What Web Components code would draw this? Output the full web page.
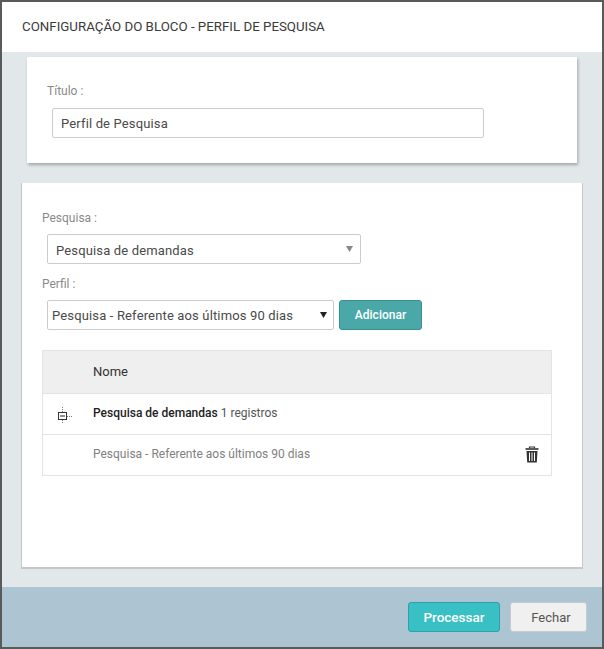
<!DOCTYPE html>
<html lang="pt">
<head>
<meta charset="utf-8">
<title>Configuração do bloco</title>
<style>
  html, body { margin: 0; padding: 0; background: #555; }
  body { font-family: Roboto, "Liberation Sans", sans-serif; }
</style>
</head>
<body>
<config-dialog heading="CONFIGURAÇÃO DO BLOCO - PERFIL DE PESQUISA">
  <config-card style="--card-margin: 5px 25px 20px 25px; --card-height: 106px; --card-pad: 27px 20px 0 20px; --card-shadow: 1px 2px 3px rgba(0, 0, 0, 0.28);">
    <field-label>Título :</field-label>
    <text-box style="--box-margin: 10px 0 0 5px; --box-width: 432px;" pad="8px">Perfil de Pesquisa</text-box>
  </config-card>
  <config-card style="--card-margin: 0 20px; --card-height: 384px; --card-pad: 28px 20px 0 20px; --card-shadow: 0 1px 0 1px #c4c8cb;">
    <field-label>Pesquisa :</field-label>
    <text-box style="--box-margin: 9px 0 0 5px; --box-width: 314px; --box-top: 2px;" pad="8px" arrow="soft">Pesquisa de demandas</text-box>
    <field-label style="--label-margin: 13px 0 0 0;">Perfil :</field-label>
    <div style="display:flex; gap:5px; margin:9px 0 0 5px;">
      <text-box style="--box-width: 287px;" pad="4px" arrow="hard">Pesquisa - Referente aos últimos 90 dias</text-box>
      <action-button kind="add">Adicionar</action-button>
    </div>
    <result-table name="Pesquisa de demandas" count="1 registros" item="Pesquisa - Referente aos últimos 90 dias"></result-table>
  </config-card>
  <action-button slot="footer" kind="primary">Processar</action-button>
  <action-button slot="footer" kind="close">Fechar</action-button>
</config-dialog>

<script>
// dialog frame: header, grey body, blue footer
class ConfigDialog extends HTMLElement {
  constructor() {
    super();
    const root = this.attachShadow({ mode: 'open' });
    root.innerHTML = `
<style>
  :host {
    display: flex;
    flex-direction: column;
    box-sizing: border-box;
    width: 604px;
    height: 649px;
    border: 2px solid #5a5a5a;
    background: #e2e7ea;
  }
  header {
    flex: 0 0 50px;
    display: flex;
    align-items: center;
    padding-left: 20px;
    padding-bottom: 1px;
    box-sizing: border-box;
    background: #fff;
    color: #3a3a3a;
    font-size: 13.3px;
  }
  main { flex: 1; }
  footer {
    flex: 0 0 60px;
    display: flex;
    justify-content: flex-end;
    align-items: center;
    gap: 10px;
    padding: 0 15px 0 0;
    box-sizing: border-box;
    background: #adc4d2;
  }
</style>
<header></header>
<main><slot></slot></main>
<footer><slot name="footer"></slot></footer>`;
    root.querySelector('header').textContent = this.getAttribute('heading');
  }
}

class ConfigCard extends HTMLElement {
  constructor() {
    super();
    this.attachShadow({ mode: 'open' }).innerHTML = `
<style>
  :host {
    display: block;
    box-sizing: border-box;
    margin: var(--card-margin);
    height: var(--card-height);
    padding: var(--card-pad);
    background: #fff;
    box-shadow: var(--card-shadow);
  }
</style>
<slot></slot>`;
  }
}

class FieldLabel extends HTMLElement {
  constructor() {
    super();
    this.attachShadow({ mode: 'open' }).innerHTML = `
<style>
  :host {
    display: block;
    margin: var(--label-margin, 0);
    color: #8a8a8a;
    font-size: 12px;
    line-height: 14px;
  }
</style>
<slot></slot>`;
  }
}

// looks like an input or a select, depending on the arrow attribute
class TextBox extends HTMLElement {
  constructor() {
    super();
    const arrow = this.getAttribute('arrow');
    let icon = '';
    if (arrow === 'soft') {
      icon = '<svg width="7" height="6" viewBox="0 0 7 6"><path d="M0 0H7L3.5 6Z" fill="#888"/></svg>';
    } else if (arrow === 'hard') {
      icon = '<svg width="7" height="6" viewBox="0 0 7 6"><path d="M0 0H7L3.5 6Z" fill="#222"/></svg>';
    }
    this.attachShadow({ mode: 'open' }).innerHTML = `
<style>
  :host {
    display: flex;
    align-items: center;
    justify-content: space-between;
    box-sizing: border-box;
    width: var(--box-width);
    height: 30px;
    margin: var(--box-margin, 0);
    padding: 0 ${arrow === 'hard' ? '6px' : '7px'} 0 ${this.getAttribute('pad')};
    background: #fff;
    border: 1px solid #ccc;
    border-radius: 2px;
    color: #4a4a4a;
    font-size: 13px;
    letter-spacing: 0.15px;
  }
  span { padding-top: var(--box-top, 0); }
</style>
<span><slot></slot></span>${icon}`;
  }
}

class ActionButton extends HTMLElement {
  constructor() {
    super();
    this.attachShadow({ mode: 'open' }).innerHTML = `
<style>
  :host {
    display: flex;
    align-items: center;
    justify-content: center;
    box-sizing: border-box;
    height: 30px;
    border-radius: 3px;
    font-weight: 500;
    font-size: 13.5px;
  }
  :host([kind=add]) {
    width: 83px;
    background: #4aa8a9;
    border: 1px solid #3a8f90;
    color: #fff;
    font-size: 12px;
  }
  :host([kind=primary]) {
    width: 92px;
    background: #38c0c4;
    border: 1px solid #2ba3a8;
    color: #fff;
  }
  :host([kind=close]) {
    width: 77px;
    padding-left: 5px;
    background: #f0f0f0;
    border: 1px solid #c4ccd2;
    color: #555;
    font-weight: 400;
    font-size: 13px;
  }
</style>
<slot></slot>`;
  }
}

class ResultTable extends HTMLElement {
  constructor() {
    super();
    const root = this.attachShadow({ mode: 'open' });
    root.innerHTML = `
<style>
  :host {
    display: block;
    width: 510px;
    margin-top: 20px;
    border: 1px solid #e4e4e4;
    box-sizing: border-box;
    font-size: 12px;
    color: #333;
  }
  .row {
    display: flex;
    align-items: center;
    height: 41px;
    padding: 0 0 2px 50px;
    box-sizing: border-box;
    border-top: 1px solid #e4e4e4;
    position: relative;
  }
  .head {
    height: 42px;
    border-top: 0;
    background: #efefef;
    font-size: 13px;
    color: #333;
  }
  .tree { position: absolute; left: 15px; top: 13px; }
  .trash { position: absolute; right: 12px; top: 11px; }
  b { font-weight: 500; color: #222; margin-right: 3px; }
  .count { color: #555; }
  .item { color: #808080; }
</style>
<div class="row head">Nome</div>
<div class="row">
  <svg class="tree" width="14" height="16" viewBox="0 0 14 16">
    <path d="M4.5 0v6M4.5 13v3M9 9.5h5" stroke="#777" stroke-width="1" stroke-dasharray="1 1" fill="none"/>
    <rect x="0.5" y="5.5" width="8" height="7" fill="#fff" stroke="#333"/>
    <path d="M2 9h5" stroke="#222" stroke-width="1"/>
  </svg>
  <b class="name"></b><span class="count"></span>
</div>
<div class="row">
  <span class="item"></span>
  <svg class="trash" width="14" height="17" viewBox="0 0 14 17">
    <path d="M4.5 2V1h5v1" fill="none" stroke="#333" stroke-width="1.2"/>
    <path d="M0.5 2.2h13v1.6h-13z" fill="#333"/>
    <path d="M1.5 5h11l-.7 11.5H2.2z" fill="#333"/>
    <path d="M4.5 6.5v8.5M7 6.5v8.5M9.5 6.5v8.5" stroke="#fff" stroke-width="1"/>
  </svg>
</div>`;
    root.querySelector('.name').textContent = this.getAttribute('name');
    root.querySelector('.count').textContent = this.getAttribute('count');
    root.querySelector('.item').textContent = this.getAttribute('item');
  }
}

customElements.define('config-dialog', ConfigDialog);
customElements.define('config-card', ConfigCard);
customElements.define('field-label', FieldLabel);
customElements.define('text-box', TextBox);
customElements.define('action-button', ActionButton);
customElements.define('result-table', ResultTable);
</script>
</body>
</html>
